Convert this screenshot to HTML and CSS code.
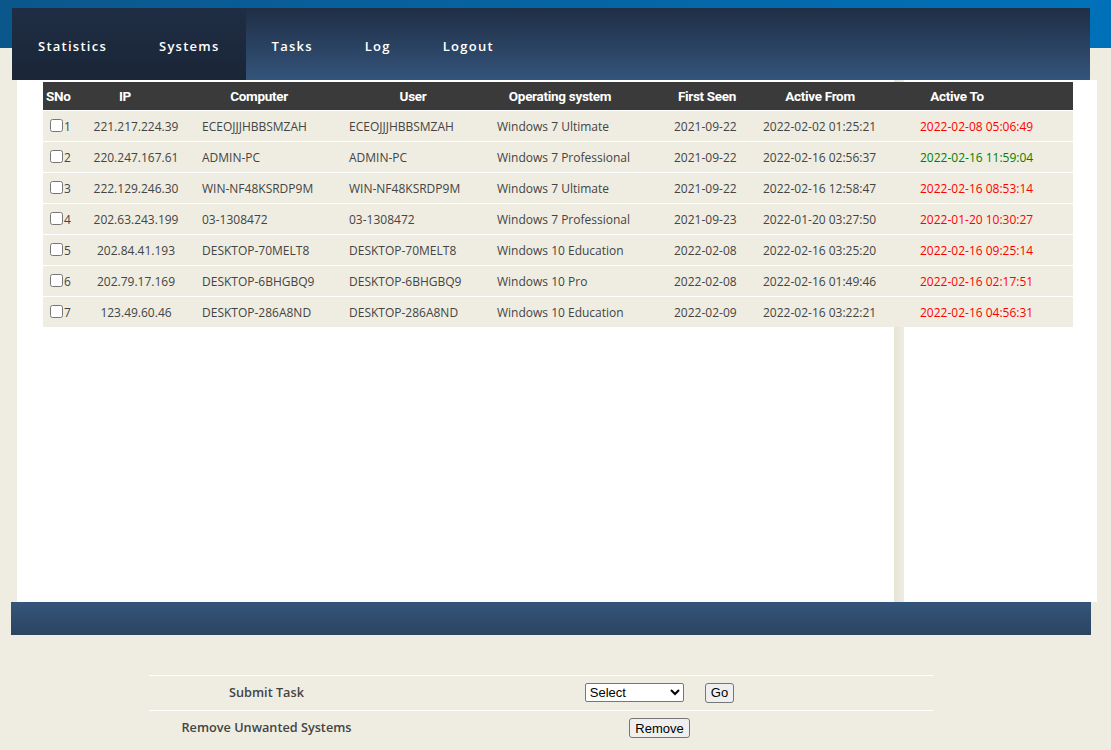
FILE: index.html
```html
<!DOCTYPE html>
<html>
<head>
<meta charset="utf-8">
<title>Systems</title>
<link rel="stylesheet" href="styles.css">
</head>
<body>
<header class="top">
  <nav class="nav">
    <a class="nav-item dark" href="#">Statistics</a>
    <a class="nav-item dark" href="#">Systems</a>
    <a class="nav-item" href="#">Tasks</a>
    <a class="nav-item" href="#">Log</a>
    <a class="nav-item" href="#">Logout</a>
  </nav>
</header>

<div class="content">
  <div class="panel-main"></div>
  <div class="panel-side"></div>
  <div class="systems">
    <div class="thead">
      <div class="th th-sno">SNo</div>
      <div class="th">IP</div>
      <div class="th">Computer</div>
      <div class="th">User</div>
      <div class="th">Operating system</div>
      <div class="th">First Seen</div>
      <div class="th">Active From</div>
      <div class="th">Active To</div>
      <div class="th"></div>
    </div>
    <div class="row">
      <div class="td sno"><input type="checkbox" class="chk">1</div>
      <div class="td ip">221.217.224.39</div>
      <div class="td">ECEOJJJHBBSMZAH</div>
      <div class="td">ECEOJJJHBBSMZAH</div>
      <div class="td">Windows 7 Ultimate</div>
      <div class="td">2021-09-22</div>
      <div class="td">2022-02-02 01:25:21</div>
      <div class="td off">2022-02-08 05:06:49</div>
    </div>
    <div class="row">
      <div class="td sno"><input type="checkbox" class="chk">2</div>
      <div class="td ip">220.247.167.61</div>
      <div class="td">ADMIN-PC</div>
      <div class="td">ADMIN-PC</div>
      <div class="td">Windows 7 Professional</div>
      <div class="td">2021-09-22</div>
      <div class="td">2022-02-16 02:56:37</div>
      <div class="td on">2022-02-16 11:59:04</div>
    </div>
    <div class="row">
      <div class="td sno"><input type="checkbox" class="chk">3</div>
      <div class="td ip">222.129.246.30</div>
      <div class="td">WIN-NF48KSRDP9M</div>
      <div class="td">WIN-NF48KSRDP9M</div>
      <div class="td">Windows 7 Ultimate</div>
      <div class="td">2021-09-22</div>
      <div class="td">2022-02-16 12:58:47</div>
      <div class="td off">2022-02-16 08:53:14</div>
    </div>
    <div class="row">
      <div class="td sno"><input type="checkbox" class="chk">4</div>
      <div class="td ip">202.63.243.199</div>
      <div class="td">03-1308472</div>
      <div class="td">03-1308472</div>
      <div class="td">Windows 7 Professional</div>
      <div class="td">2021-09-23</div>
      <div class="td">2022-01-20 03:27:50</div>
      <div class="td off">2022-01-20 10:30:27</div>
    </div>
    <div class="row">
      <div class="td sno"><input type="checkbox" class="chk">5</div>
      <div class="td ip">202.84.41.193</div>
      <div class="td">DESKTOP-70MELT8</div>
      <div class="td">DESKTOP-70MELT8</div>
      <div class="td">Windows 10 Education</div>
      <div class="td">2022-02-08</div>
      <div class="td">2022-02-16 03:25:20</div>
      <div class="td off">2022-02-16 09:25:14</div>
    </div>
    <div class="row">
      <div class="td sno"><input type="checkbox" class="chk">6</div>
      <div class="td ip">202.79.17.169</div>
      <div class="td">DESKTOP-6BHGBQ9</div>
      <div class="td">DESKTOP-6BHGBQ9</div>
      <div class="td">Windows 10 Pro</div>
      <div class="td">2022-02-08</div>
      <div class="td">2022-02-16 01:49:46</div>
      <div class="td off">2022-02-16 02:17:51</div>
    </div>
    <div class="row">
      <div class="td sno"><input type="checkbox" class="chk">7</div>
      <div class="td ip">123.49.60.46</div>
      <div class="td">DESKTOP-286A8ND</div>
      <div class="td">DESKTOP-286A8ND</div>
      <div class="td">Windows 10 Education</div>
      <div class="td">2022-02-09</div>
      <div class="td">2022-02-16 03:22:21</div>
      <div class="td off">2022-02-16 04:56:31</div>
    </div>
  </div>
</div>

<div class="footer-bar"></div>

<div class="actions">
  <div class="action-row">
    <div class="action-label">Submit Task</div>
    <div class="action-ctrl">
      <select class="sel"><option>Select</option></select>
      <button class="btn btn-go" type="button">Go</button>
    </div>
  </div>
  <div class="action-row">
    <div class="action-label">Remove Unwanted Systems</div>
    <div class="action-ctrl">
      <button class="btn" type="button">Remove</button>
    </div>
  </div>
</div>
</body>
</html>
```

FILE: styles.css
```css
html, body {
  margin: 0;
  padding: 0;
}
body {
  background: #efede1;
  font-family: "Open Sans", "DejaVu Sans", sans-serif;
  color: #444;
  width: 1111px;
  height: 750px;
  overflow: hidden;
}

/* top band + nav */
.top {
  background: linear-gradient(to right, #0b578c, #0071b9) no-repeat;
  background-size: 100% 48px;
  padding: 8px 0 0 12px;
}
.nav {
  width: 1078px;
  height: 72px;
  display: flex;
  background: linear-gradient(to bottom, #1f2e45, #34547b);
}
.nav-item {
  display: flex;
  align-items: center;
  padding: 4px 26px 0 26px;
  color: #fff;
  text-decoration: none;
  font-family: "Open Sans", sans-serif;
  font-weight: 600;
  font-size: 13px;
  letter-spacing: 1.25px;
}
.nav-item.dark {
  background: linear-gradient(to bottom, #1f2e45, #1a2536);
}

/* content */
.content {
  margin-left: 17px;
  width: 1080px;
  height: 522px;
  display: grid;
  grid-template-columns: 877px 10px 193px;
  grid-template-rows: auto 1fr;
  background: linear-gradient(to right, #e6e4d5, #efede1);
  background-size: 10px 100%;
  background-position: 877px 0;
  background-repeat: no-repeat;
}
.panel-main {
  grid-area: 1 / 1 / 3 / 2;
  background: #fff;
}
.panel-side {
  grid-area: 1 / 3 / 3 / 4;
  background: #fff;
}
.systems {
  grid-area: 1 / 1 / 2 / 4;
  margin: 2px 0 0 26px;
  width: 1030px;
  display: flex;
  flex-direction: column;
  gap: 1px;
  background: #fff;
}
.thead {
  display: grid;
  grid-template-columns: 28px 108px 160px 148px 146px 148px 78px 196px 18px;
  height: 28px;
  background: #3a3a3a;
  color: #fff;
  font-family: Roboto, "Liberation Sans", sans-serif;
  font-weight: bold;
  font-size: 13.5px;
  letter-spacing: -0.3px;
}
.th {
  display: flex;
  align-items: center;
  justify-content: center;
  white-space: nowrap;
}
.th-sno {
  justify-content: flex-start;
  padding-left: 3px;
}
.row {
  display: grid;
  grid-template-columns: 37px 112px 147px 148px 177px 89px 157px 163px;
  height: 30px;
  background: #efede1;
  font-size: 12px;
  color: #444;
}
.td {
  display: flex;
  align-items: center;
  padding-left: 10px;
  padding-top: 1px;
  white-space: nowrap;
}
.td.sno {
  padding-left: 0;
}
.td.ip {
  padding-left: 0;
  justify-content: center;
}
.chk {
  width: 13px;
  height: 13px;
  margin: 0 1px 2px 7px;
}
.off { color: #ff0000; }
.on { color: #008000; }

/* footer */
.footer-bar {
  margin-left: 11px;
  width: 1080px;
  height: 33px;
  background: linear-gradient(to bottom, #34557a, #2b4461);
}

/* actions */
.actions {
  margin: 40px 0 0 149px;
  width: 784px;
}
.action-row {
  display: grid;
  grid-template-columns: 235px 549px;
  height: 34px;
  border-top: 1px solid #fff;
}
.action-label {
  display: flex;
  align-items: center;
  justify-content: center;
  padding-bottom: 3px;
  font-weight: 600;
  font-size: 12.7px;
  color: #444;
}
.action-ctrl {
  display: flex;
  align-items: center;
  justify-content: center;
  padding-left: 2px;
}
.sel {
  width: 99px;
  height: 19px;
  margin-bottom: 2px;
  font-family: "Liberation Sans", Arial, sans-serif;
  font-size: 13px;
  color: #000;
  background: #fff;
  border: 1px solid #767676;
  border-radius: 2px;
  padding: 0;
}
.btn {
  font-family: "Liberation Sans", Arial, sans-serif;
  font-size: 13px;
  color: #000;
  background: #efefef;
  border: 1px solid #767676;
  border-radius: 3px;
  padding: 1px 5px;
  height: 20px;
  line-height: 15px;
}
.btn-go {
  margin-left: 21px;
  margin-bottom: 1px;
}
```
